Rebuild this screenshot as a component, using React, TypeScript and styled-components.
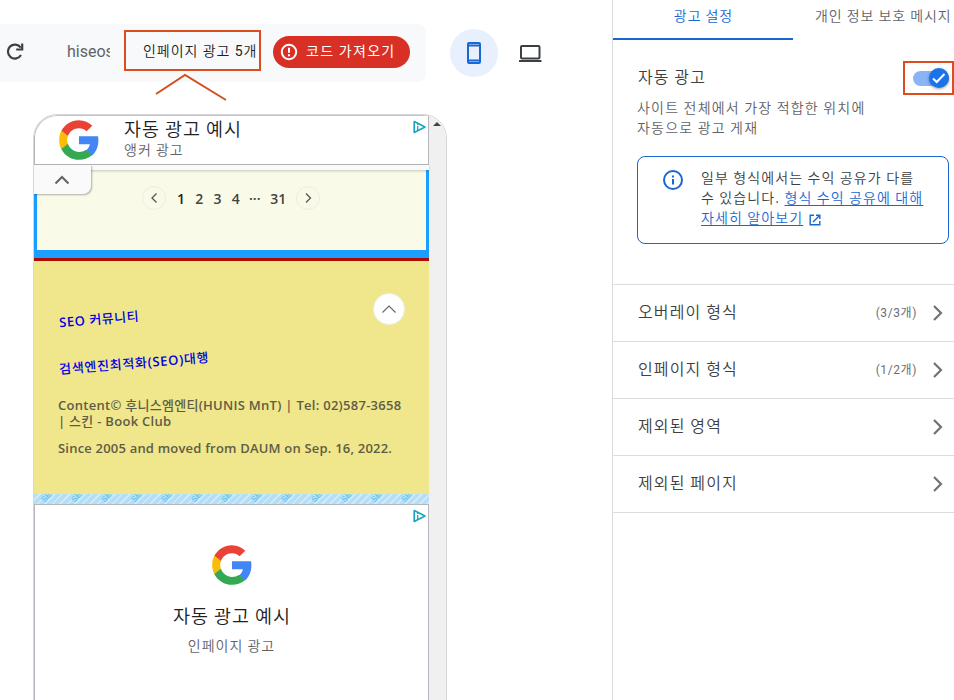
import React from "react";
import styled, { createGlobalStyle, css } from "styled-components";

const GlobalStyle = createGlobalStyle`
  *, *::before, *::after { box-sizing: border-box; }
  body {
    margin: 0;
    background: #fff;
    color: #3c4043;
    font-family: Roboto, "Noto Sans CJK KR", sans-serif;
    font-size: 14px;
  }
`;

const hangul = css`
  font-family: "Noto Sans CJK KR", sans-serif;
  font-weight: 350;
  white-space: nowrap;
`;

const Page = styled.div`
  display: flex;
  width: 954px;
  height: 700px;
  overflow: hidden;
`;

const Main = styled.main`
  width: 612px;
  padding-top: 24px;
`;

const Toolbar = styled.header`
  display: flex;
  align-items: center;
  height: 58px;
`;

const AddressBar = styled.div`
  display: flex;
  align-items: center;
  width: 426px;
  height: 58px;
  padding-left: 3px;
  background: #f8f9fb;
  border-radius: 0 8px 8px 0;
`;

const ReloadIcon = styled.svg`
  display: block;
  width: 24px;
  height: 24px;
  margin-bottom: 4px;
`;

const SiteName = styled.span`
  width: 43px;
  margin-left: 40px;
  margin-bottom: 3px;
  overflow: hidden;
  font-size: 16px;
  line-height: 24px;
  color: #5f6368;
`;

const AdCount = styled.div`
  position: relative;
  width: 137px;
  height: 41px;
  margin-left: 14px;
  margin-bottom: 5px;
  padding-left: 17px;
  border: 2px solid #dc4c1e;
  ${hangul}
  font-family: Roboto, "Noto Sans CJK KR", sans-serif;
  line-height: 38px;
  letter-spacing: 0.95px;
  color: #202124;
`;

const Digit = styled.span`
  font-weight: 400;
`;

const Caret = styled.svg`
  position: absolute;
  left: 29px;
  top: 40px;
  width: 74px;
  height: 30px;
`;

const CodeButton = styled.button`
  display: flex;
  align-items: center;
  width: 137px;
  height: 32px;
  margin-left: 12px;
  margin-bottom: 3px;
  padding: 0 0 0 6px;
  border: 0;
  border-radius: 16px;
  background: #d93025;
  color: #fff;
`;

const CodeLabel = styled.span`
  ${hangul}
  margin-left: 7px;
  margin-bottom: 4px;
  font-size: 14px;
  font-weight: 400;
  line-height: 20px;
  letter-spacing: 1.3px;
`;

const DeviceButton = styled.button<{ $active?: boolean }>`
  display: flex;
  align-items: center;
  justify-content: center;
  width: 48px;
  height: 48px;
  margin-left: ${(p) => (p.$active ? 24 : 8)}px;
  padding: 0;
  border: 0;
  border-radius: 50%;
  background: ${(p) => (p.$active ? "#e8f0fe" : "transparent")};
`;

const Device = styled.section`
  display: flex;
  width: 414px;
  height: 620px;
  margin: 32px 0 0 33px;
  overflow: hidden;
  border: 1px solid #d4d6da;
  border-radius: 24px 24px 0 0;
`;

const Screen = styled.div`
  width: 395px;
`;

const Scrollbar = styled.div`
  flex: 1;
  padding: 7px 0 0 4px;
  background: #f0f0f0;
`;

const Arrow = styled.div`
  width: 8px;
  border: 4px solid transparent;
  border-top: 0;
  border-bottom: 4px solid #444;
`;

const AnchorAd = styled.div`
  position: relative;
  display: flex;
  height: 50px;
  padding: 4px 0 0 24px;
  border: 1px solid #b4b6bc;
  border-top-color: #c4c6ca;
  border-top-left-radius: 23px;
  background: #fff;
`;

const AnchorText = styled.div`
  margin: -4px 0 0 25px;
`;

const AdTitle = styled.div`
  ${hangul}
  font-size: 18.5px;
  line-height: 24px;
  letter-spacing: 0.95px;
  color: #202124;
`;

const AdCaption = styled.div`
  ${hangul}
  font-size: 14px;
  line-height: 19px;
  letter-spacing: 1px;
  color: #5f6368;
`;

const AdMark = styled.svg`
  position: absolute;
  right: 2px;
  top: 4px;
  width: 13px;
  height: 14px;
`;

const AnchorEdge = styled.div`
  position: relative;
  z-index: 1;
  height: 5px;
  background: #fafafa;
  box-shadow: 0 1px 3px rgba(0, 0, 0, 0.2);
`;

const CollapseTab = styled.div`
  position: absolute;
  left: 0;
  top: 0;
  display: flex;
  align-items: center;
  justify-content: center;
  width: 57px;
  height: 29px;
  padding-right: 1px;
  background: #fafafa;
  border-bottom-right-radius: 8px;
  box-shadow: 1px 1px 2px rgba(0, 0, 0, 0.3);
  clip-path: inset(0 -5px -5px 0);
`;

const ListFrame = styled.div`
  height: 88px;
  padding-top: 16px;
  border: solid #1a9eff;
  border-width: 0 3px 8px;
  background: #f9fae8;
`;

const Pager = styled.nav`
  display: flex;
  align-items: center;
  height: 24px;
  margin-left: 105px;
  font: 600 14px/24px "Open Sans", sans-serif;
  color: #444;
`;

const PagerButton = styled.span`
  display: flex;
  flex: 0 0 24px;
  align-items: center;
  justify-content: center;
  height: 24px;
  border: 1px solid #eceee4;
  border-radius: 50%;
`;

const PageNumber = styled.span<{ $current?: boolean; $width?: number }>`
  flex: 0 0 ${(p) => p.$width ?? 18.2}px;
  padding-top: 2px;
  text-align: center;
  color: ${(p) => (p.$current ? "#222" : "#444")};
`;

const Numbers = styled.div`
  display: flex;
  width: 124px;
  margin-left: 6px;
`;

const Footer = styled.footer`
  position: relative;
  height: 236px;
  padding: 48px 24px 0;
  border-top: 3px solid #ab0b00;
  background: #f0e68c;
  font: 600 13px/16px "Open Sans", "Noto Sans CJK KR", sans-serif;
  color: #5f5c45;
`;

const FooterLink = styled.a<{ $spacing: number }>`
  display: block;
  width: max-content;
  height: 20px;
  margin: 0 0 24px 1px;
  line-height: 20px;
  letter-spacing: ${(p) => p.$spacing}px;
  color: #0000e6;
  white-space: nowrap;
  transform: rotate(-4.5deg);
`;

const FooterText = styled.p<{ $spacing: number }>`
  margin: 0 0 11px;
  white-space: pre;
  letter-spacing: ${(p) => p.$spacing}px;
`;

const Korean = styled.span`
  font-weight: 500;
`;

const TopButton = styled.button`
  position: absolute;
  right: 24px;
  top: 32px;
  display: flex;
  align-items: center;
  justify-content: center;
  width: 32px;
  height: 32px;
  padding: 0;
  border: 1px solid #eee;
  border-radius: 50%;
  background: #fff;
`;

const PatternStrip = styled.div`
  display: flex;
  height: 10px;
  padding-left: 9px;
  overflow: hidden;
  background: repeating-linear-gradient(
    135deg, #b2dff5 0 3.3px, #cdeafa 3.3px 5.3px
  );
`;

const PatternWord = styled.span`
  flex: 0 0 30px;
  height: 10px;
  font: 700 8px/10px "Liberation Sans", sans-serif;
  color: #74c2ea;
  transform: rotate(-45deg);
  transform-origin: 3px 6px;
`;

const InPageAd = styled.div`
  position: relative;
  display: flex;
  flex-direction: column;
  align-items: center;
  height: 240px;
  padding-top: 40px;
  border: 1px solid #b4b8be;
  background: #fff;
`;

const InPageTitle = styled(AdTitle)`
  margin-top: 17px;
  padding-left: 1px;
  line-height: 26px;
`;

const InPageCaption = styled(AdCaption)`
  margin-top: 8px;
`;

const Panel = styled.aside`
  width: 342px;
  border-left: 1px solid #dadce0;
`;

const Tabs = styled.div`
  display: flex;
  height: 40px;
`;

const Tab = styled.div<{ $active?: boolean }>`
  ${hangul}
  flex: 0 0 ${(p) => (p.$active ? 180 : 161)}px;
  padding-left: ${(p) => (p.$active ? 1 : 22)}px;
  border-bottom: 2px solid ${(p) => (p.$active ? "#1967d2" : "transparent")};
  text-align: ${(p) => (p.$active ? "center" : "left")};
  line-height: 30px;
  letter-spacing: 0.95px;
  color: ${(p) => (p.$active ? "#1967d2" : "#5f6368")};
`;

const Settings = styled.div`
  height: 244px;
  padding: 21px 0 0 24px;
`;

const AutoAds = styled.div`
  display: flex;
  align-items: center;
  justify-content: space-between;
  height: 34px;
`;

const Heading = styled.h2`
  ${hangul}
  margin: 0;
  padding: 0 0 5px 1px;
  font-size: 16px;
  line-height: 24px;
  letter-spacing: 1.1px;
  color: #3c4043;
`;

const ToggleFrame = styled.div`
  display: flex;
  align-items: center;
  width: 51px;
  height: 34px;
  padding-left: 8px;
  border: 2px solid #dc4c1e;
`;

const Track = styled.div`
  display: flex;
  align-items: center;
  justify-content: flex-end;
  width: 36px;
  height: 15px;
  border-radius: 8px;
  background: #8ab4f8;
`;

const Thumb = styled.div`
  display: flex;
  flex: 0 0 20px;
  align-items: center;
  justify-content: center;
  height: 20px;
  border-radius: 50%;
  background: #1a73e8;
  box-shadow: 0 1px 3px rgba(0, 0, 0, 0.4);
`;

const Description = styled.p`
  ${hangul}
  margin: 2px 0 0;
  line-height: 20px;
  letter-spacing: 1.2px;
  color: #5f6368;
`;

const Notice = styled.div`
  display: flex;
  width: 312px;
  height: 88px;
  margin-top: 19px;
  padding: 11px 0 0 24px;
  border: 1px solid #1967d2;
  border-radius: 8px;
`;

const NoticeText = styled.p`
  ${hangul}
  margin: -1px 0 0 17px;
  line-height: 20px;
  letter-spacing: 1.13px;
  color: #3c4043;
`;

const NoticeLink = styled.a`
  color: #1967d2;
  text-decoration: underline;
  text-underline-offset: 2px;
`;

const ExternalIcon = styled.svg`
  width: 14px;
  height: 14px;
  margin-left: 5px;
  vertical-align: -4px;
`;

const SettingRow = styled.div`
  display: flex;
  align-items: center;
  height: 57px;
  padding: 0 8px 0 25px;
  border-top: 1px solid #dadce0;

  &:last-child {
    height: 58px;
    border-bottom: 1px solid #dadce0;
  }
`;

const RowLabel = styled.span`
  ${hangul}
  flex: 1;
  padding-bottom: 5px;
  font-size: 16px;
  letter-spacing: 1.15px;
  color: #3c4043;
`;

const RowCount = styled.span`
  margin-right: 13px;
  padding-bottom: 3px;
  font-size: 12px;
  letter-spacing: 0.6px;
  color: #6b6f74;
`;

const GoogleLogo = () => (
  <svg width="40" height="40" viewBox="3.8 3.8 40.4 40.4">
    <path fill="#ea4335" d="M24 12.2c3 0 5.600 1 7.700 3l5.700-5.700C33.900 6.200 29.300 4 24 4 16.200 4 9.400 8.500 6.100 15l6.700 5.200C14.400 15.500 18.800 12.200 24 12.200z" />
    <path fill="#4285f4" d="M43.200 20.300H24v8.100h11c-.5 2.600-1.900 4.700-4.100 6.200l6.500 5C41.200 36.100 43.600 30.800 43.600 24.500c0-1.500-.1-2.800-.4-4.200z" />
    <path fill="#fbbc05" d="M12.800 28.200c-.4-1.300-.7-2.700-.7-4.200s.3-2.900.7-4.200L6.100 14.600C4.700 17.400 4 20.600 4 24s.8 6.600 2.100 9.400z" />
    <path fill="#34a853" d="M24 44c5.400 0 9.900-1.800 13.400-4.800l-6.500-5c-1.800 1.200-4.200 1.900-6.900 1.900-5.200 0-9.600-3.500-11.200-8.200L6.100 33C9.400 39.500 16.200 44 24 44z" />
  </svg>
);

const AdChoices = () => (
  <AdMark viewBox="0 0 13 14" fill="none" stroke="#16a5bb" strokeWidth="1.600" strokeLinejoin="round">
    <path d="M1.200 1.500v11L12 7z" />
    <path d="M4.700 6v4M4.700 4v1" strokeWidth="1.300" />
  </AdMark>
);

const Chevron = ({ d, w, h, color, stroke }: { d: string; w: number; h: number; color: string; stroke: number }) => (
  <svg width={w} height={h} viewBox={`0 0 ${w} ${h}`} fill="none" stroke={color} strokeWidth={stroke}>
    <path d={d} />
  </svg>
);

const rows = [
  { label: "오버레이 형식", count: "(3/3개)" },
  { label: "인페이지 형식", count: "(1/2개)" },
  { label: "제외된 영역" },
  { label: "제외된 페이지" },
];

export default function App() {
  return (
    <Page>
      <GlobalStyle />
      <Main>
        <Toolbar>
          <AddressBar>
            <ReloadIcon viewBox="0 0 24 24" fill="none" stroke="#3c4043" strokeWidth="2.200">
              <path d="M18 16a7 7 0 1 1-.3-7.400" />
              <path d="M19.200 4.500v6h-6" />
            </ReloadIcon>
            <SiteName>hiseos</SiteName>
            <AdCount>
              인페이지 광고 <Digit>5</Digit>개
              <Caret viewBox="0 0 74 30" fill="none" stroke="#d2501f" strokeWidth="2">
                <path d="M1 22 30 3l41 25" />
              </Caret>
            </AdCount>
            <CodeButton>
              <svg width="20" height="20" viewBox="0 0 20 20" fill="none" stroke="#fff" strokeWidth="2">
                <circle cx="10" cy="10" r="7.200" />
                <path d="M10 5.700v5M10 12.200v2" />
              </svg>
              <CodeLabel>코드 가져오기</CodeLabel>
            </CodeButton>
          </AddressBar>
          <DeviceButton $active>
            <svg width="16" height="24" viewBox="0 0 16 24" fill="none" stroke="#1967d2" strokeWidth="2">
              <rect x="2" y="2" width="12" height="20" rx="1" />
              <path d="M2 4.500h12M2 19.500h12" />
            </svg>
          </DeviceButton>
          <DeviceButton>
            <svg width="24" height="20" viewBox="0 0 24 20" fill="none" stroke="#3c4043" strokeWidth="2">
              <rect x="3" y="3" width="18.500" height="12.500" rx="1" />
              <path d="M1 18h22.500" />
            </svg>
          </DeviceButton>
        </Toolbar>

        <Device>
          <Screen>
            <AnchorAd>
              <GoogleLogo />
              <AnchorText>
                <AdTitle>자동 광고 예시</AdTitle>
                <AdCaption>앵커 광고</AdCaption>
              </AnchorText>
              <AdChoices />
            </AnchorAd>
            <AnchorEdge>
              <CollapseTab>
                <Chevron w={16} h={10} d="M1.500 8.500 8 2l6.500 6.500" color="#5f6368" stroke={2} />
              </CollapseTab>
            </AnchorEdge>
            <ListFrame>
              <Pager>
                <PagerButton>
                  <Chevron w={8} h={12} d="M6.500 1.500 2 6l4.500 4.500" color="#555" stroke={1.3} />
                </PagerButton>
                <Numbers>
                  <PageNumber $current>1</PageNumber>
                  <PageNumber>2</PageNumber>
                  <PageNumber>3</PageNumber>
                  <PageNumber>4</PageNumber>
                  <PageNumber $width={20}>···</PageNumber>
                  <PageNumber $width={27}>31</PageNumber>
                </Numbers>
                <PagerButton>
                  <Chevron w={8} h={12} d="M2 1.500 6.500 6 2 10.500" color="#555" stroke={1.3} />
                </PagerButton>
              </Pager>
            </ListFrame>
            <Footer>
              <FooterLink $spacing={0.55}>
                SEO <Korean>커뮤니티</Korean>
              </FooterLink>
              <FooterLink $spacing={0.7}>
                <Korean>검색엔진최적화</Korean>(SEO)<Korean>대행</Korean>
              </FooterLink>
              <FooterText $spacing={0.28}>
                Content© <Korean>후니스엠엔티</Korean>
                {"(HUNIS MnT) | Tel: 02)587-3658\n| "}
                <Korean>스킨</Korean> - Book Club
              </FooterText>
              <FooterText $spacing={0.2}>Since 2005 and moved from DAUM on Sep. 16, 2022.</FooterText>
              <TopButton>
                <Chevron w={16} h={10} d="M1.500 8.500 8 2l6.500 6.500" color="#666" stroke={1.1} />
              </TopButton>
            </Footer>
            <PatternStrip>
              {Array.from({ length: 13 }, (_, i) => (
                <PatternWord key={i}>SEO</PatternWord>
              ))}
            </PatternStrip>
            <InPageAd>
              <AdChoices />
              <GoogleLogo />
              <InPageTitle>자동 광고 예시</InPageTitle>
              <InPageCaption>인페이지 광고</InPageCaption>
            </InPageAd>
          </Screen>
          <Scrollbar>
            <Arrow />
          </Scrollbar>
        </Device>
      </Main>

      <Panel>
        <Tabs>
          <Tab $active>광고 설정</Tab>
          <Tab>개인 정보 보호 메시지</Tab>
        </Tabs>
        <Settings>
          <AutoAds>
            <Heading>자동 광고</Heading>
            <ToggleFrame>
              <Track>
                <Thumb>
                  <svg width="16" height="14" viewBox="0 0 16 14" fill="none" stroke="#fff" strokeWidth="2">
                    <path d="m2 7.500 3.700 3.500L13.500 3" />
                  </svg>
                </Thumb>
              </Track>
            </ToggleFrame>
          </AutoAds>
          <Description>
            사이트 전체에서 가장 적합한 위치에
            <br />
            자동으로 광고 게재
          </Description>
          <Notice>
            <svg width="22" height="22" viewBox="0 0 22 22" fill="none" stroke="#1967d2" strokeWidth="2">
              <circle cx="11" cy="12" r="9" />
              <path d="M11 11v5.500M11 7.500v2" />
            </svg>
            <NoticeText>
              일부 형식에서는 수익 공유가 다를
              <br />
              수 있습니다.{" "}
              <NoticeLink>
                형식 수익 공유에 대해
                <br />
                자세히 알아보기
              </NoticeLink>
              <ExternalIcon viewBox="0 0 14 14" fill="none" stroke="#1967d2" strokeWidth="1.400">
                <path d="M6 2.200H2.200v9.600h9.600V8M8 2.200h3.800V6M11.800 2.200 5 9" />
              </ExternalIcon>
            </NoticeText>
          </Notice>
        </Settings>
        <div>
          {rows.map((row) => (
            <SettingRow key={row.label}>
              <RowLabel>{row.label}</RowLabel>
              {row.count && <RowCount>{row.count}</RowCount>}
              <Chevron w={16} h={18} d="M4 2l7 7-7 7" color="#6f7378" stroke={2.2} />
            </SettingRow>
          ))}
        </div>
      </Panel>
    </Page>
  );
}
